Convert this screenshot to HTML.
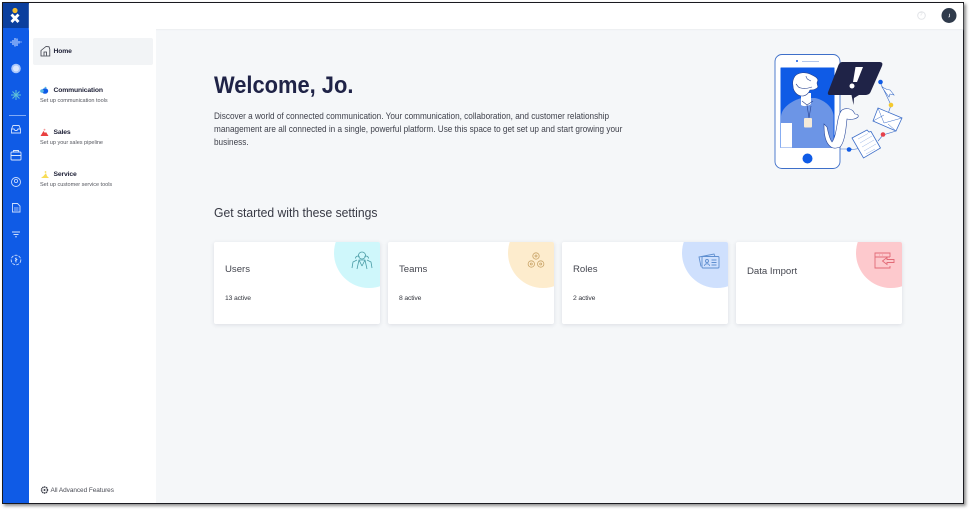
<!DOCTYPE html>
<html><head><meta charset="utf-8">
<style>
*{box-sizing:border-box;margin:0;padding:0}
html,body{width:970px;height:510px;overflow:hidden;background:#fff;font-family:"Liberation Sans",sans-serif}
.a{position:absolute;white-space:nowrap}
#frame{position:absolute;left:2px;top:2px;width:962px;height:502px;background:#f5f7f9;border:1px solid #1a1a20;box-shadow:2px 2px 3px rgba(0,0,0,.45);overflow:hidden}
.card{position:absolute;top:242px;width:166px;height:82px;background:#fff;border-radius:2px;box-shadow:0 1px 4px rgba(30,40,70,.12);overflow:hidden}
.card i{position:absolute;left:120px;top:-24px;width:70px;height:70px;border-radius:50%}
.ct{position:absolute;left:11px;font-size:9.600px;color:#44464f;white-space:nowrap}
.cs{position:absolute;left:11px;top:52.500px;font-size:6.800px;color:#33353d;white-space:nowrap;letter-spacing:-.15px}
.nt{font-size:6.800px;font-weight:bold;color:#22243a;letter-spacing:-.15px}
.ns{font-size:5.550px;color:#55575f;letter-spacing:-.02px}
</style></head><body>
<div id="frame"></div>
<div class="a" style="left:3px;top:3px;width:26px;height:500px;background:#0f5be6"></div>
<div class="a" style="left:3px;top:3px;width:26px;height:25px;background:#0b3f9e"></div>
<div class="a" style="left:29px;top:3px;width:934px;height:26px;background:#fff;box-shadow:0 1px 1px #eceef1"></div>
<div class="a" style="left:29px;top:29px;width:127px;height:474px;background:#fff"></div>
<div class="a" style="left:33px;top:38px;width:120px;height:27px;background:#f2f4f6;border-radius:2px"></div>

<svg class="a" style="left:3px;top:3px" width="154" height="500" viewBox="3 3 154 500" fill="none">
<circle cx="15" cy="10.500" r="2.600" fill="#f4bd2e"/>
<path d="M11.500 14.500 L18.500 22 M18.500 14.500 L11.500 22" stroke="#fff" stroke-width="2.800"/>
<path d="M11 41.500v1.500M13 40v5M15 38v8.500M17 38.500v7.500M19 41v2.500M21 41.500v1" stroke="#a9c6fb" stroke-width="1.300"/>
<circle cx="16" cy="68.500" r="4.800" fill="#a9c6fb"/><circle cx="16" cy="68.500" r="3" fill="#dbe7fd"/>
<path d="M16 90v10M11 95h10M12.500 91.500l7 7M19.500 91.500l-7 7" stroke="#5fc0d8" stroke-width="1"/>
<path d="M9 115.500H26" stroke="#a9c6fb" stroke-width=".8"/>
<path d="M11.500 129l1.500-3.500h6l1.500 3.500v4h-9zM11.500 129h2.500l1 1.500h2l1-1.500h2.500" stroke="#cfdffc" stroke-width=".9"/>
<rect x="11" y="152" width="10" height="8" rx="1" stroke="#dbe7fd" stroke-width=".9"/><path d="M13.500 152v-1.500h5V152M11 155.500h10" stroke="#dbe7fd" stroke-width=".9"/>
<circle cx="16" cy="182" r="4.500" stroke="#cfdffc" stroke-width=".9"/><circle cx="16" cy="181" r="1.600" stroke="#cfdffc" stroke-width=".8"/>
<path d="M12.500 203.500h5l2.500 2.500v6h-7.500z" stroke="#cfdffc" stroke-width=".9"/><path d="M14 208h4.500M14 210h4.500" stroke="#cfdffc" stroke-width=".7"/>
<path d="M12 232h8M13.500 234.500h5M15 236.800h2" stroke="#cfdffc" stroke-width=".9"/>
<circle cx="16" cy="260" r="4.800" stroke="#cfdffc" stroke-width=".9" stroke-dasharray="3 1.200"/><path d="M16 257.500v5M15 258.500l2 1-2 1.500" stroke="#dbe7fd" stroke-width=".8"/>
<path d="M41 50.500l5-4 3 .3.800 2.500v6.700h-8.800zM44 55.500v-3.500h2.500v3.500" stroke="#3a3d48" stroke-width=".8"/>
<ellipse cx="45" cy="91" rx="3.200" ry="2.800" fill="#0f5be6"/><circle cx="42" cy="91" r="1.800" fill="#54b7e6"/><circle cx="45.500" cy="87.800" r="1" fill="#54b7e6"/>
<path d="M40.500 136l3-5 1.500 2 1-1 2.500 4z" fill="#e9403f"/><circle cx="44.500" cy="129.700" r=".9" fill="#f49a9a"/>
<path d="M41 178l2.500-2 2.500-3 1 3 2 2z" fill="#f7dc55"/><circle cx="45.500" cy="172" r=".9" fill="#f7dc55"/>
<circle cx="44.500" cy="490" r="3" stroke="#3a3d48" stroke-width="1.400" stroke-dasharray="1.400 .5"/><circle cx="44.500" cy="490" r="1" fill="#3a3d48"/>
</svg>

<div class="a nt" style="left:53.500px;top:48px">Home</div>
<div class="a nt" style="left:53.500px;top:87px">Communication</div>
<div class="a ns" style="left:40px;top:97.500px">Set up communication tools</div>
<div class="a nt" style="left:53.500px;top:129px">Sales</div>
<div class="a ns" style="left:40px;top:140px">Set up your sales pipeline</div>
<div class="a nt" style="left:53.500px;top:171px">Service</div>
<div class="a ns" style="left:40px;top:182px">Set up customer service tools</div>
<div class="a" style="left:50.500px;top:486.500px;font-size:6.450px;color:#4a4c55;letter-spacing:-.05px">All Advanced Features</div>

<div class="a" style="left:919.500px;top:11.500px;font-size:5.500px;color:#d6d8dd">?</div>
<svg class="a" style="left:914px;top:8px" width="44" height="16" viewBox="0 0 44 16" fill="none">
<circle cx="7.500" cy="7.500" r="3.800" stroke="#e2e4e8" stroke-width="1"/>
<circle cx="35" cy="7.500" r="7.500" fill="#2f3a4b"/>
<path d="M35.500 5.800v2.800l-1 .6" stroke="#e8eaee" stroke-width=".8"/>
</svg>

<div class="a" style="left:213.500px;top:72px;font-size:24.400px;font-weight:bold;color:#1f2347;transform:scaleX(.897);transform-origin:left top">Welcome, Jo.</div>
<div class="a" style="left:213.500px;top:109.500px;font-size:8.750px;line-height:13px;color:#3f414b;transform:scaleX(.937);transform-origin:left top">Discover a world of connected communication. Your communication, collaboration, and customer relationship<br>management are all connected in a single, powerful platform. Use this space to get set up and start growing your<br>business.</div>
<div class="a" style="left:213.500px;top:206px;font-size:12.600px;color:#373944;transform:scaleX(.965);transform-origin:left top">Get started with these settings</div>

<div class="card" style="left:214px"><i style="background:#cff7fb"></i><div class="ct" style="top:21.500px">Users</div><div class="cs">13 active</div>
<svg style="position:absolute;left:136px;top:8px" width="24" height="22" viewBox="0 0 24 22" fill="none" stroke="#4a9ca6" stroke-width=".8"><circle cx="12" cy="5.500" r="3.500"/><path d="M5.500 8.500a2.500 2.500 0 0 1 4-2M18.500 8.500a2.500 2.500 0 0 0-4-2M7 19l2-9h6l2 9M12 16l-3-6M12 16l3-6M2 18l1-6 4-2M22 18l-1-6-4-2"/></svg></div>
<div class="card" style="left:388px"><i style="background:#fdeccd"></i><div class="ct" style="top:21.500px">Teams</div><div class="cs">8 active</div>
<svg style="position:absolute;left:136px;top:8px" width="24" height="22" viewBox="0 0 24 22" fill="none" stroke="#c9a468" stroke-width=".8"><circle cx="12" cy="6" r="3.200"/><circle cx="7.300" cy="14" r="3.200"/><circle cx="16.700" cy="14" r="3.200"/><circle cx="12" cy="6" r="1"/><circle cx="7.300" cy="14" r="1"/><circle cx="16.700" cy="14" r="1"/></svg></div>
<div class="card" style="left:562px"><i style="background:#cfe0fd"></i><div class="ct" style="top:21.500px">Roles</div><div class="cs">2 active</div>
<svg style="position:absolute;left:135px;top:9px" width="24" height="20" viewBox="0 0 24 20" fill="none" stroke="#5f8fd0" stroke-width=".9"><path d="M4 15.500L2 6l15-3 1 2.500"/><rect x="5" y="5.500" width="17" height="11.500" rx="1"/><circle cx="10" cy="10" r="1.500"/><path d="M7.500 15c0-3 5-3 5 0M14.500 9h5M14.500 11.500h5M14.500 14h5"/></svg></div>
<div class="card" style="left:736px"><i style="background:#fdc9cd"></i><div class="ct" style="top:23.500px">Data Import</div>
<svg style="position:absolute;left:136px;top:9px" width="24" height="20" viewBox="0 0 24 20" fill="none" stroke="#e26a76" stroke-width=".9"><path d="M18 6V2H3v15h15v-2M3 6h15"/><path d="M7 4h.5M10 4h.5"/><path d="M22 8.500h-7v-2l-4.500 3.500 4.500 3.500v-2h7z"/></svg></div>

<svg class="a" style="left:770px;top:50px" width="136" height="122" viewBox="770 50 136 122" fill="none">
<path d="M880 82l11 23 -4 12M896 131l-13 4-5 6M852 149h-12M849 150l14-2" stroke="#3e6fc9" stroke-width=".6"/>
<rect x="775" y="54.500" width="65" height="114" rx="7" fill="#fff" stroke="#3e6fc9" stroke-width=".9"/>
<circle cx="797" cy="61" r="1" fill="#0f5be6"/><path d="M802 61.500h17" stroke="#9bb6e6" stroke-width=".7"/>
<rect x="780.500" y="67.500" width="54" height="80.500" rx=".5" fill="#0f5be6"/>
<circle cx="807.500" cy="158.500" r="5" fill="#0f5be6"/>
<path d="M781 148v-32c1-9 12-16 21-18h13c9 2 17 8 18.500 17v33z" fill="#6c95e6"/>
<rect x="781" y="123" width="11" height="24.500" fill="#fff"/>
<path d="M801 105v-12h10v11c-3 2-7 3-10 1z" fill="#fff"/>
<path d="M795 76c4-4 11-4 15-2 4 2 7 3 8 6l-1 3 1 4c-2 3-6 3-8 3-1 3-4 6-8 6-5 0-9-5-9-10-1-4 0-7 2-10z" fill="#fff" stroke="#27418f" stroke-width=".6"/>
<path d="M796 84c2 2 2 4 5 4 3 1 8 0 11-1M806 76c0 3 3 4 5 5" stroke="#27418f" stroke-width=".6"/>
<path d="M802 101l5 4 6-4M807 105l2 13M811 106l-2 12" stroke="#27418f" stroke-width=".6"/>
<rect x="804" y="118" width="8" height="9.500" rx="1" fill="#f4ead9"/>
<path d="M824 124c0 10 1 19 7 23 3 2 6 1 9 0 3-3 5-11 6-19l1-9c4 1 9 0 11-2 1-2-1-3-3-3l-2-3c-3-3-8-3-11-1-3 3-4 9-5 15-1 6-2 13-5 17-3-4-4-11-5-15z" fill="#fff" stroke="#2c4b9e" stroke-width=".6"/>
<path d="M842 62h37c3 0 4 1 3 4l-11 25c-1 3-3 4-6 4h-6l-5 3-.5 7-2-10h-22c-2 0-2-2-1-4l10-26c1-2 2-3 3.500-3z" fill="#1f2347"/>
<path d="M855.500 67h7.500l-6 15h-4z" fill="#fff"/><circle cx="852" cy="86" r="2.500" fill="#fff"/>
<circle cx="880.500" cy="82" r="2.300" fill="#0f5be6"/>
<path d="M882 87l5 2.500 3 .5 4 5-4-1-1 3-3-4z" fill="#fff" stroke="#3e6fc9" stroke-width=".6"/>
<circle cx="891" cy="105" r="2.300" fill="#f4c92e"/>
<path d="M878 108l24 10-6 13-23-10z" fill="#fff" stroke="#3e6fc9" stroke-width=".8"/>
<path d="M878 108l6 15 18-5M873 121l11-6M896 131l-8-7" stroke="#3e6fc9" stroke-width=".5"/>
<circle cx="883" cy="134.500" r="2.300" fill="#e5404a"/>
<path d="M852 138l15-8 2 2 2-.5 9.500 16.500-17 10z" fill="#fff" stroke="#3e6fc9" stroke-width=".8"/>
<path d="M858 139l10-5.500M860 143l12-7M862 147l12-7M864 151l12-7M866 154l9-5" stroke="#9bb6e6" stroke-width=".5"/>
<circle cx="849" cy="149.500" r="2.300" fill="#0f5be6"/>
</svg>
</body></html>
